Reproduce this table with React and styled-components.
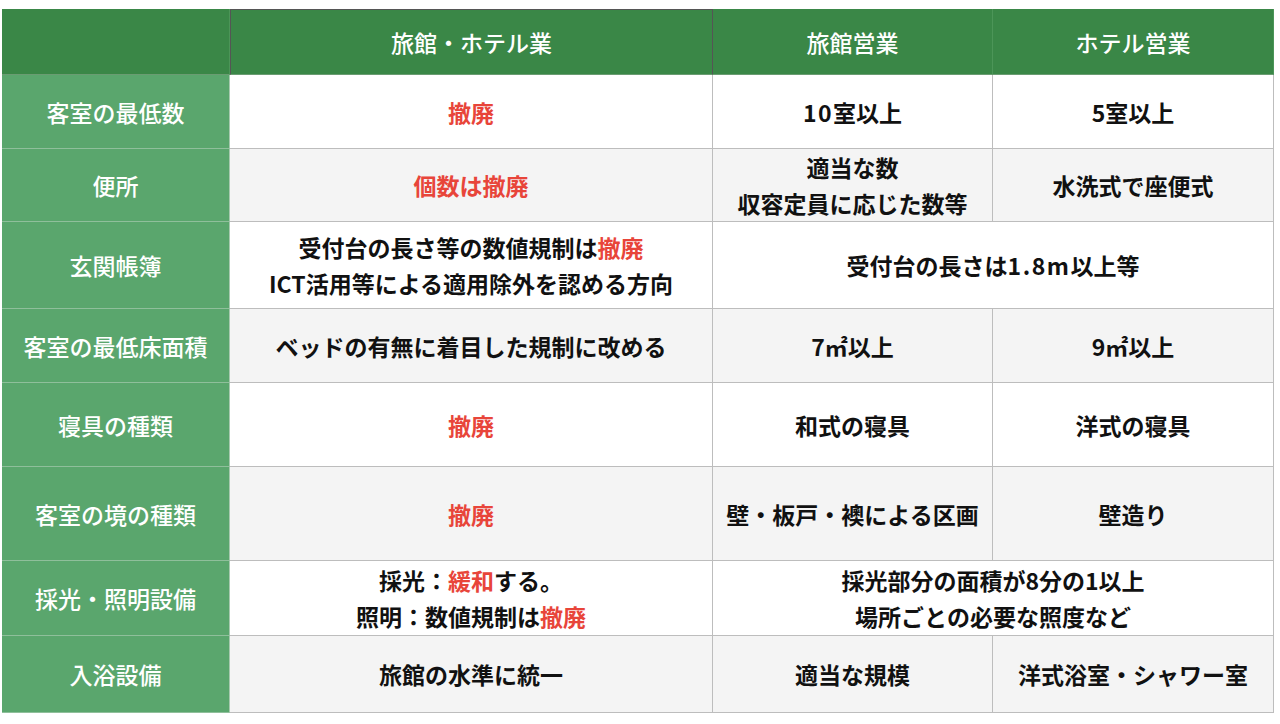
import React from "react";
import styled, { createGlobalStyle, css } from "styled-components";

const Global = createGlobalStyle`
  html, body { margin: 0; padding: 0; background: #fff; }
  body { font-family: "Noto Sans CJK JP", "Noto Sans", sans-serif; }
`;

const Page = styled.div`
  width: 1280px;
  height: 724px;
  padding: 9px 0 0 2px;
  box-sizing: border-box;
`;

const Grid = styled.div`
  display: grid;
  grid-template-columns: 228px 483px 280px 281px;
  grid-template-rows: 66px 74px 73px 87px 74px 84px 94px 75px 77px;
`;

const Cell = styled.div`
  box-sizing: border-box;
  display: flex;
  flex-direction: column;
  align-items: center;
  justify-content: center;
  text-align: center;
  font-size: 23px;
  font-weight: 700;
  line-height: 36px;
  color: #111;
  background: ${(p) => (p.$alt ? "#f4f4f4" : "#ffffff")};
  border-right: 1px solid #bdbdbd;
  border-bottom: 1px solid #bdbdbd;
  ${(p) => p.$span && css`grid-column: span ${p.$span};`}
`;

const HeadCell = styled(Cell)`
  background: #3a8747;
  color: #fff;
  font-weight: 500;
  border-right: 1px solid ${(p) => (p.$dark ? "#555" : "#4c9558")};
  border-bottom: 1px solid #6a9c72;
  ${(p) =>
    p.$dark &&
    css`
      border-top: 1px solid #555;
      border-left: 1px solid #555;
    `}
`;

const RowHead = styled(Cell)`
  background: #5aa66d;
  color: #fff;
  font-weight: 500;
  border-right: 1px solid #a7c9af;
  border-bottom: 1px solid #8fbf9b;
`;

const Red = styled.span`
  color: #e8453a;
`;

const Num = styled.span`
  letter-spacing: 1.5px;
`;

const Line = styled.div``;

const rows = [
  {
    h: "客室の最低数",
    cells: [[<Red>撤廃</Red>], [<><Num>10</Num>室以上</>], ["5室以上"]],
  },
  {
    h: "便所",
    cells: [[<Red>個数は撤廃</Red>], ["適当な数", "収容定員に応じた数等"], ["水洗式で座便式"]],
  },
  {
    h: "玄関帳簿",
    cells: [
      [<>受付台の長さ等の数値規制は<Red>撤廃</Red></>, "ICT活用等による適用除外を認める方向"],
      { span: 2, lines: [<>受付台の長さは<Num>1.8m</Num>以上等</>] },
    ],
  },
  {
    h: "客室の最低床面積",
    cells: [["ベッドの有無に着目した規制に改める"], ["7㎡以上"], ["9㎡以上"]],
  },
  {
    h: "寝具の種類",
    cells: [[<Red>撤廃</Red>], ["和式の寝具"], ["洋式の寝具"]],
  },
  {
    h: "客室の境の種類",
    cells: [[<Red>撤廃</Red>], ["壁・板戸・襖による区画"], ["壁造り"]],
  },
  {
    h: "採光・照明設備",
    cells: [
      [<>採光：<Red>緩和</Red>する。</>, <>照明：数値規制は<Red>撤廃</Red></>],
      { span: 2, lines: ["採光部分の面積が8分の1以上", "場所ごとの必要な照度など"] },
    ],
  },
  {
    h: "入浴設備",
    cells: [["旅館の水準に統一"], ["適当な規模"], ["洋式浴室・シャワー室"]],
  },
];

export default function App() {
  return (
    <>
      <Global />
      <Page>
        <Grid>
          <HeadCell />
          <HeadCell $dark>旅館・ホテル業</HeadCell>
          <HeadCell>旅館営業</HeadCell>
          <HeadCell>ホテル営業</HeadCell>
          {rows.map((r, i) => {
            const alt = i % 2 === 1;
            return (
              <React.Fragment key={i}>
                <RowHead>{r.h}</RowHead>
                {r.cells.map((c, j) => {
                  const lines = Array.isArray(c) ? c : c.lines;
                  const span = Array.isArray(c) ? undefined : c.span;
                  return (
                    <Cell key={j} $alt={alt} $span={span}>
                      {lines.map((l, k) => (
                        <Line key={k}>{l}</Line>
                      ))}
                    </Cell>
                  );
                })}
              </React.Fragment>
            );
          })}
        </Grid>
      </Page>
    </>
  );
}
